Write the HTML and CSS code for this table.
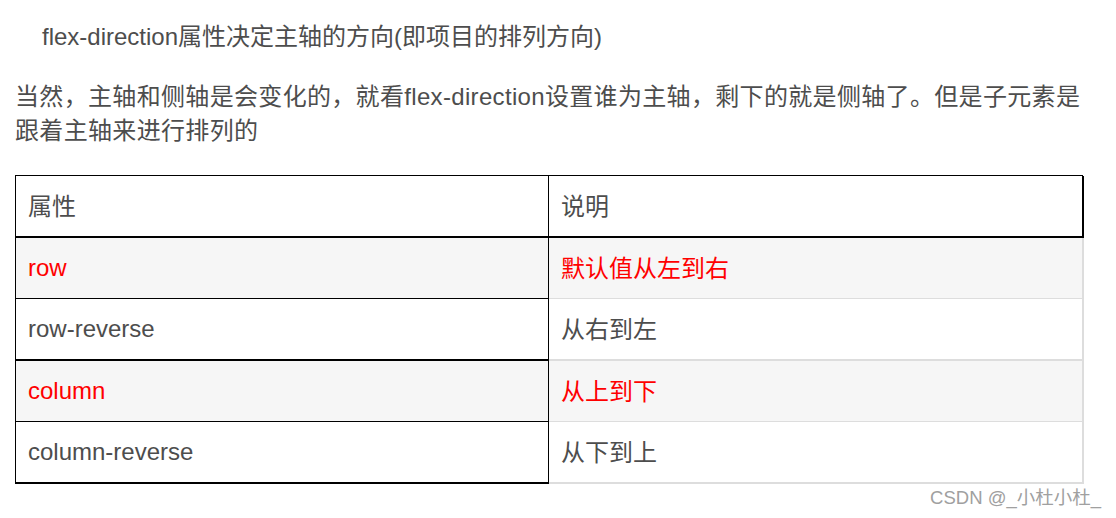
FILE: index.html
```html
<!DOCTYPE html>
<html lang="zh-CN">
<head>
<meta charset="utf-8">
<title>flex-direction</title>
<link rel="stylesheet" href="styles.css">
</head>
<body>
<div class="page">
  <p class="intro">flex-direction属性决定主轴的方向(即项目的排列方向)</p>
  <p class="para">当然，主轴和侧轴是会变化的，就看flex-direction设置谁为主轴，剩下的就是侧轴了。但是子元素是跟着主轴来进行排列的</p>
  <div class="tbl">
    <div class="cell l head cjk">属性</div>
    <div class="cell r head cjk">说明</div>
    <div class="cell l alt red b1">row</div>
    <div class="cell r alt red b1 cjk">默认值从左到右</div>
    <div class="cell l b2">row-reverse</div>
    <div class="cell r b2 cjk">从右到左</div>
    <div class="cell l alt red b1">column</div>
    <div class="cell r alt red b1 cjk">从上到下</div>
    <div class="cell l b2">column-reverse</div>
    <div class="cell r b2 cjk">从下到上</div>
  </div>
  <div class="mark">CSDN @_小杜小杜_</div>
</div>
</body>
</html>
```
FILE: styles.css
```css
html, body {
  margin: 0;
  padding: 0;
  background: #fff;
}
.page {
  position: relative;
  width: 1116px;
  height: 518px;
  overflow: hidden;
  font-family: "Liberation Sans", "Noto Sans CJK SC", sans-serif;
  font-size: 24px;
  color: #4d4d4d;
}
.intro {
  margin: 20px 0 0 0;
  padding-left: 42px;
  line-height: 34px;
}
.para {
  margin: 26px 0 0 15px;
  width: 1076px;
  line-height: 34px;
  letter-spacing: 0.33px;
}
.tbl {
  margin: 27px 0 0 15px;
  width: 1068px;
  display: grid;
  grid-template-columns: 533px 535px;
  border-top: 1px solid #000;
  border-left: 1px solid #000;
  box-sizing: border-box;
}
.cell {
  height: 60px;
  display: flex;
  align-items: center;
  padding-left: 12px;
  box-sizing: content-box;
}
.cell.cjk {
  height: 57px;
  padding-bottom: 3px;
}
.cell.l {
  border-right: 1px solid #000;
}
.cell.r {
  border-right: 2px solid #ddd;
}
.cell.head {
  border-bottom: 2px solid #000;
}
.cell.r.head {
  border-right-color: #000;
}
.cell.l.b1 { border-bottom: 1px solid #000; }
.cell.l.b2 { border-bottom: 2px solid #000; }
.cell.r.b1 { border-bottom: 1px solid #ddd; }
.cell.r.b2 { border-bottom: 2px solid #ddd; }
.alt {
  background: #f6f6f6;
}
.red {
  color: #ff0000;
}
.mark {
  position: absolute;
  right: 15px;
  top: 487px;
  font-size: 18.5px;
  line-height: 22px;
  color: #a0a0a0;
}
```
